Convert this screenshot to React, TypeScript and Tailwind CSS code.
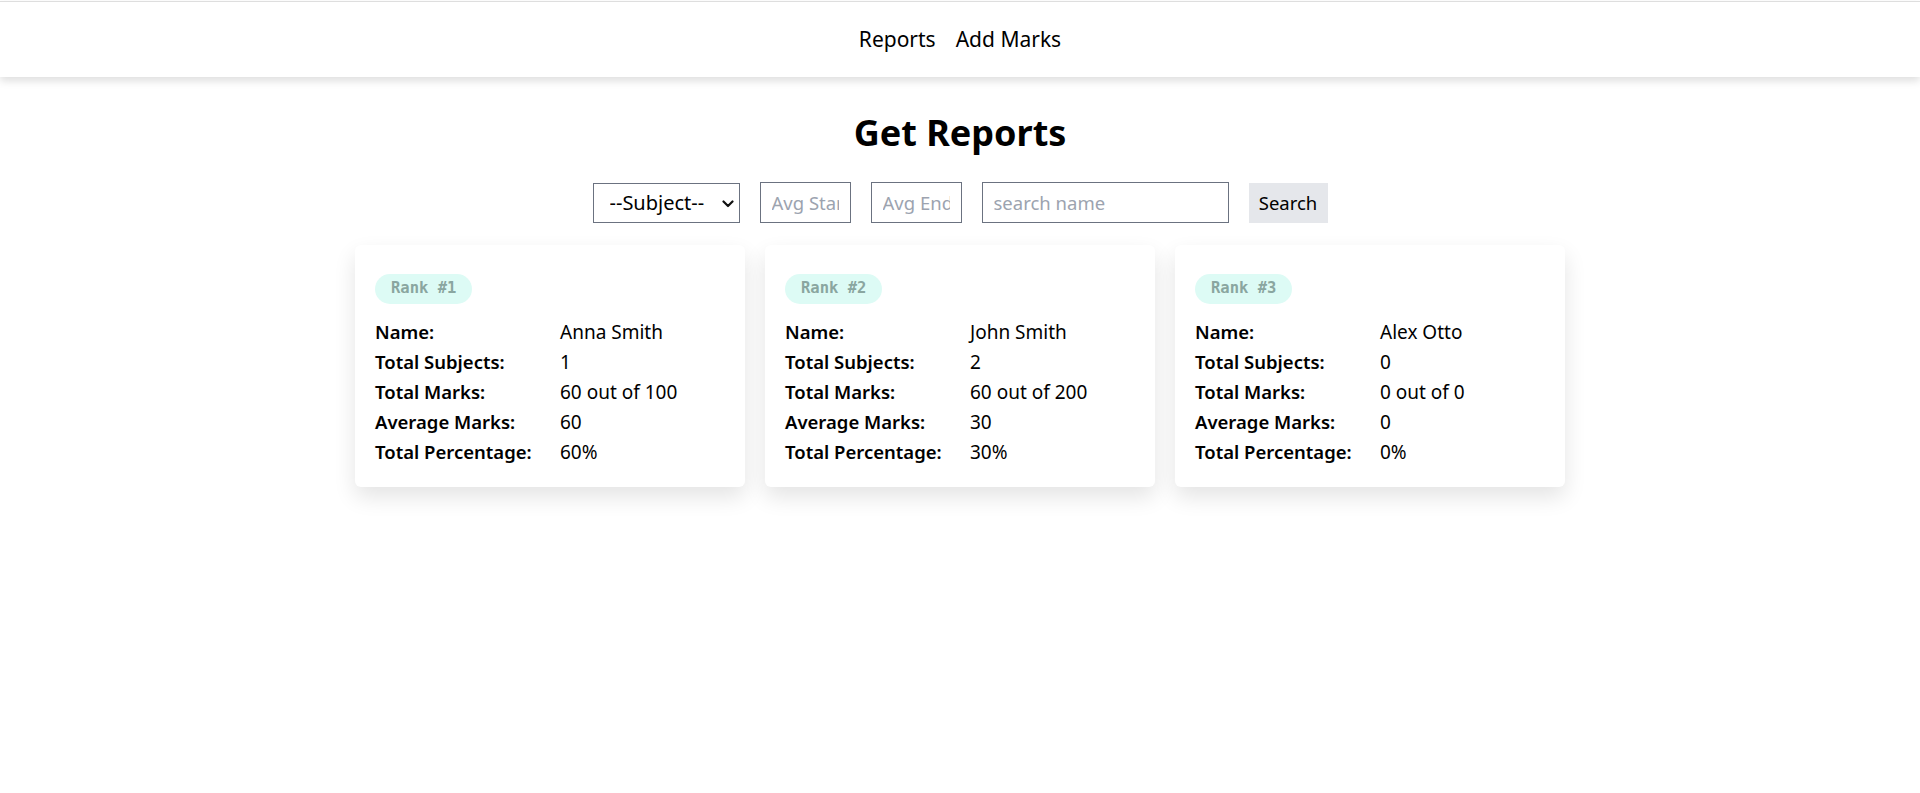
import React from "react";

type Report = {
  rank: number;
  name: string;
  subjects: number;
  total: string;
  avg: string;
  pct: string;
};

const reports: Report[] = [
  { rank: 1, name: "Anna Smith", subjects: 1, total: "60 out of 100", avg: "60", pct: "60%" },
  { rank: 2, name: "John Smith", subjects: 2, total: "60 out of 200", avg: "30", pct: "30%" },
  { rank: 3, name: "Alex Otto", subjects: 0, total: "0 out of 0", avg: "0", pct: "0%" },
];

function Row({ label, value }: { label: string; value: React.ReactNode }) {
  return (
    <>
      <div className="text-[18.5px] font-semibold">{label}</div>
      <div className="text-[19px]">{value}</div>
    </>
  );
}

function Card({ r }: { r: Report }) {
  return (
    <div className="w-[390px] rounded-md bg-white px-5 pt-[26px] pb-5 shadow-[0_10px_22px_rgba(0,0,0,0.11)]">
      <div className="inline-flex h-[30px] items-center rounded-full bg-[#ddfbf5] px-4 font-['DejaVu_Sans_Mono',monospace] text-[15.5px] font-bold text-[#8aa6a0]">
        {"Rank #" + r.rank}
      </div>
      <div className="mt-[13px] grid grid-cols-[185px_1fr] leading-[30px]">
        <Row label="Name:" value={r.name} />
        <Row label="Total Subjects:" value={r.subjects} />
        <Row label="Total Marks:" value={r.total} />
        <Row label="Average Marks:" value={r.avg} />
        <Row label="Total Percentage:" value={r.pct} />
      </div>
    </div>
  );
}

export default function App() {
  return (
    <div className="min-h-screen bg-white pt-px font-['Noto_Sans',sans-serif] text-[20px] text-black">
      <nav className="flex h-[76px] items-center justify-center gap-[20px] border-t border-[#dedede] bg-white text-[21px] shadow-[0_4px_8px_rgba(0,0,0,0.13)]">
        <a className="cursor-pointer">Reports</a>
        <a className="cursor-pointer">Add Marks</a>
      </nav>
      <main className="flex flex-col items-center">
        <h1 className="mt-[36px] text-[36px] leading-[40px] font-bold">Get Reports</h1>
        <form className="mt-[29px] flex items-center gap-5" onSubmit={(e) => e.preventDefault()}>
          <div className="relative">
            <select className="h-[40px] w-[147px] appearance-none border border-[#6b7280] bg-white pl-[16px] pr-8 text-[20px] outline-none">
              <option>--Subject--</option>
            </select>
            <svg
              className="pointer-events-none absolute top-[17px] left-[129px]"
              width="12"
              height="8"
              viewBox="0 0 12 8"
              fill="none"
            >
              <path d="M1.5 1.5 L6 6 L10.5 1.5" stroke="#111" strokeWidth="2.2" strokeLinecap="round" strokeLinejoin="round" />
            </svg>
          </div>
          <input
            className="h-[41px] w-[91px] border border-[#6b7280] px-[11px] text-[18.5px] outline-none placeholder:text-[#9ca3af]"
            placeholder="Avg Start"
          />
          <input
            className="h-[41px] w-[91px] border border-[#6b7280] px-[11px] text-[18.5px] outline-none placeholder:text-[#9ca3af]"
            placeholder="Avg End"
          />
          <input
            className="h-[41px] w-[247px] border border-[#6b7280] px-[11px] text-[18.5px] outline-none placeholder:text-[#9ca3af]"
            placeholder="search name"
          />
          <button type="submit" className="h-[40px] w-[79px] bg-[#e5e7eb] text-[18.5px]">
            Search
          </button>
        </form>
        <div className="mt-[22px] flex gap-5">
          {reports.map((r) => (
            <Card key={r.rank} r={r} />
          ))}
        </div>
      </main>
    </div>
  );
}
